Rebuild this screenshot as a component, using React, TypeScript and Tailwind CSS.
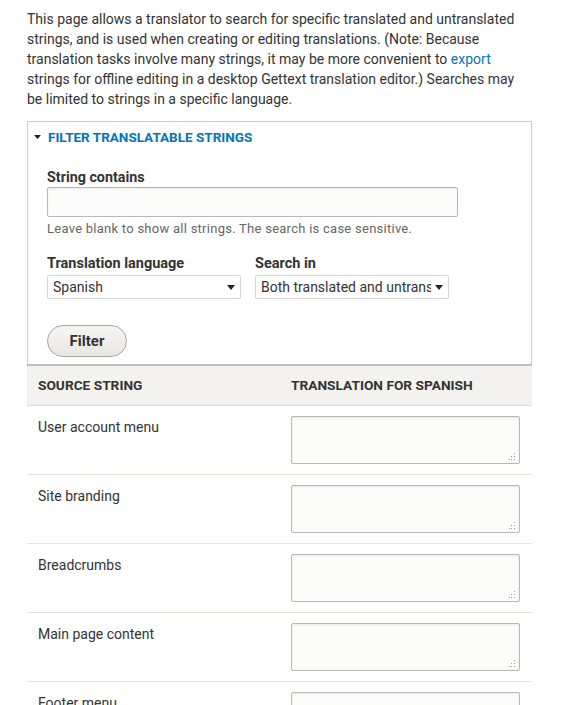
import React from "react";

const rows = [
	"User account menu",
	"Site branding",
	"Breadcrumbs",
	"Main page content",
	"Footer menu",
];

const font = { fontFamily: "Roboto, 'Liberation Sans', sans-serif" };

const Grip = () => (
	<svg
		className="absolute right-[3px] bottom-[3px]"
		width="7"
		height="7"
		viewBox="0 0 7 7"
	>
		<rect x="5" y="0" width="1" height="1" fill="#9a9a9a" />
		<rect x="5" y="3" width="1" height="1" fill="#9a9a9a" />
		<rect x="2" y="3" width="1" height="1" fill="#9a9a9a" />
		<rect x="5" y="6" width="1" height="1" fill="#9a9a9a" />
		<rect x="2" y="6" width="1" height="1" fill="#9a9a9a" />
		<rect x="0" y="6" width="1" height="1" fill="#9a9a9a" />
	</svg>
);

const Caret = () => (
	<svg width="8" height="5" viewBox="0 0 8 5" className="shrink-0">
		<path d="M0 0h8L4 5z" fill="#222" />
	</svg>
);

const Select = ({ value }: { value: string }) => (
	<div className="flex items-center w-[194px] h-[24px] pl-[5px] pr-[5px] bg-white border border-[#d4d4d4] rounded-[2px] text-[14px] text-[#333]">
		<span className="flex-1 min-w-0 mr-[4px] whitespace-nowrap overflow-hidden">
			{value}
		</span>
		<Caret />
	</div>
);

export default function App() {
	return (
		<div
			className="w-[563px] h-[705px] overflow-hidden bg-white text-[#333]"
			style={font}
		>
			<div className="ml-[27px] w-[505px]">
				<p className="pt-[9px] text-[14px] leading-[20px] text-[#333]">
					This page allows a translator to search for specific translated and
					untranslated strings, and is used when creating or editing
					translations. (Note: Because translation tasks involve many strings,
					it may be more convenient to{" "}
					<a className="text-[#0074bd]">export</a> strings for offline editing
					in a desktop Gettext translation editor.) Searches may be limited to
					strings in a specific language.
				</p>

				<div className="mt-[12px] border border-b-0 border-[#ccc]">
					<div className="flex items-center h-[29px] pl-[6px] gap-[7px] pt-[1px]">
						<svg width="7" height="4" viewBox="0 0 7 4">
							<path d="M0 0h7L3.5 4z" fill="#222" />
						</svg>
						<span className="text-[13.5px] font-bold uppercase text-[#0074bd]">
							Filter translatable strings
						</span>
					</div>

					<div className="px-[19px] pt-[17px] pb-[7px]">
						<label className="block text-[14.3px] font-bold leading-[18px]">
							String contains
						</label>
						<div className="mt-[1px] w-[411px] h-[30px] bg-[#fcfcfa] border border-[#b8b8b8] rounded-[2px] shadow-[inset_0_1px_2px_rgba(0,0,0,0.08)]" />
						<div className="mt-[4px] text-[13px] tracking-[0.02em] text-[#666] leading-[16px]">
							Leave blank to show all strings. The search is case sensitive.
						</div>

						<div className="flex gap-[14px] mt-[18px]">
							<div>
								<label className="block text-[14.5px] font-bold leading-[18px]">
									Translation language
								</label>
								<div className="mt-[2px]">
									<Select value="Spanish" />
								</div>
							</div>
							<div>
								<label className="block text-[14.5px] font-bold leading-[18px]">
									Search in
								</label>
								<div className="mt-[2px]">
									<Select value="Both translated and untranslated strings" />
								</div>
							</div>
						</div>

						<button className="block mt-[26px] w-[80px] h-[32px] rounded-full border border-[#a6a6a6] bg-gradient-to-b from-[#f6f6f3] to-[#e8e7e0] text-[15px] font-bold text-[#333]">
							Filter
						</button>
					</div>
				</div>

				<div className="border-t-2 border-[#bfbfba] bg-[#f3f2ee] h-[42px] flex items-center border-b border-b-[#dcdbd6]">
					<div className="w-[253px] pl-[11px] text-[13.7px] font-bold uppercase">
						Source string
					</div>
					<div className="pl-[11px] text-[13.7px] font-bold uppercase">
						Translation for Spanish
					</div>
				</div>

				{rows.map((r) => (
					<div key={r} className="flex h-[69px] border-b border-[#e6e4df]">
						<div className="w-[253px] pl-[11px] pt-[12px] text-[14px] leading-[18px]">
							{r}
						</div>
						<div className="pl-[11px] pt-[10px]">
							<div className="relative w-[229px] h-[48px] bg-[#fcfcfa] border border-[#b8b8b8] rounded-[2px] shadow-[inset_0_1px_2px_rgba(0,0,0,0.08)]">
								<Grip />
							</div>
						</div>
					</div>
				))}
			</div>
		</div>
	);
}
